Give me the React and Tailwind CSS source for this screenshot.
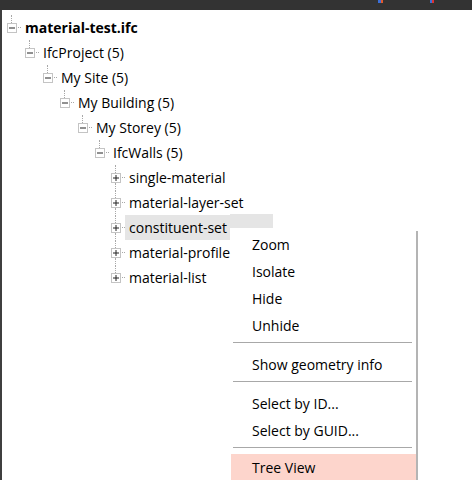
import React from "react";

// Windows-style tree view with a context menu open over it.

const rows = [
  { label: "material-test.ifc", pad: "pl-[5px]", open: true, bold: true },
  { label: "IfcProject (5)", pad: "pl-[23px]", open: true },
  { label: "My Site (5)", pad: "pl-[41px]", open: true },
  { label: "My Building (5)", pad: "pl-[58px]", open: true },
  { label: "My Storey (5)", pad: "pl-[76px]", open: true },
  { label: "IfcWalls (5)", pad: "pl-[93px]", open: true },
  { label: "single-material", pad: "pl-[109px]", leaf: true },
  { label: "material-layer-set", pad: "pl-[109px]", leaf: true },
  { label: "constituent-set", pad: "pl-[109px]", leaf: true, selected: true },
  { label: "material-profile", pad: "pl-[109px]", leaf: true },
  { label: "material-list", pad: "pl-[109px]", leaf: true, last: true },
];

function Expander({ open }) {
  return (
    <svg width="10" height="10" viewBox="0 0 10 10" className="block">
      <rect x="0.5" y="0.5" width="9" height="9" fill="white" stroke="#c4c4c4" />
      <line x1="2" y1="5" x2="8" y2="5" stroke="#222" />
      {!open && <line x1="5" y1="2" x2="5" y2="8" stroke="#222" />}
    </svg>
  );
}

function TreeRow({ row }) {
  return (
    <div className={`h-[25px] flex items-center ${row.pad}`}>
      <div className="relative">
        <span className="absolute bottom-full left-[4px] h-[8px] border-l border-dotted border-[#a8a8a8]" />
        {row.leaf && !row.last && (
          <span className="absolute top-full left-[4px] h-[8px] border-l border-dotted border-[#a8a8a8]" />
        )}
        <Expander open={row.open} />
      </div>
      <span className="w-[3px] ml-[1px] border-t border-dotted border-[#a8a8a8]" />
      <span
        className={`relative h-[25px] flex items-center pl-[4px] pr-[3px] text-[14px] text-black ${
          row.bold ? "font-bold" : ""
        } ${row.selected ? "bg-[#e5e5e5]" : ""}`}
      >
        {row.label}
        {row.selected && (
          // leftover tooltip strip next to the selected row
          <span className="absolute left-full top-[-1px] w-[43px] h-[14px] bg-[#e5e5e5]" />
        )}
      </span>
    </div>
  );
}

function MenuItem({ children, active }) {
  return (
    <div className={`h-[27px] flex items-center pl-[21px] text-[14px] text-black ${active ? "bg-[#fdd5cc]" : ""}`}>
      {children}
    </div>
  );
}

function Sep({ h }) {
  return (
    <div className={`${h} pt-[3px] pl-[2px] pr-[4px]`}>
      <div className="h-px bg-[#a8a8a8]" />
    </div>
  );
}

export default function App() {
  return (
    <div
      className="relative w-[472px] h-[480px] overflow-hidden bg-white flex flex-col"
      style={{ fontFamily: '"Open Sans", "Noto Sans", sans-serif' }}
    >
      <div className="h-[10px] bg-[#333333] shrink-0 flex items-start pl-[378px] gap-[47px]">
        <div className="flex">
          <span className="w-[3px] h-[3px] bg-[#3b6fd8]" />
          <span className="w-[2px] h-[3px] bg-[#e35a2a]" />
        </div>
        <div className="flex">
          <span className="w-[2px] h-[3px] bg-[#3b6fd8]" />
          <span className="w-[2px] h-[3px] bg-[#d33]" />
        </div>
      </div>
      <div className="flex-1 border-l-2 border-[#3f3f3f] pt-[5px]">
        {rows.map((r) => (
          <TreeRow key={r.label} row={r} />
        ))}
      </div>

      {/* context menu */}
      <div className="absolute left-[231px] top-[231px] w-[187px] h-[260px] bg-white border-r-2 border-[#b4b4b4]">
        <MenuItem>Zoom</MenuItem>
        <MenuItem>Isolate</MenuItem>
        <MenuItem>Hide</MenuItem>
        <MenuItem>Unhide</MenuItem>
        <Sep h="h-[12px]" />
        <MenuItem>Show geometry info</MenuItem>
        <Sep h="h-[12px]" />
        <MenuItem>Select by ID...</MenuItem>
        <MenuItem>Select by GUID...</MenuItem>
        <Sep h="h-[10px]" />
        <MenuItem active>Tree View</MenuItem>
      </div>
    </div>
  );
}
